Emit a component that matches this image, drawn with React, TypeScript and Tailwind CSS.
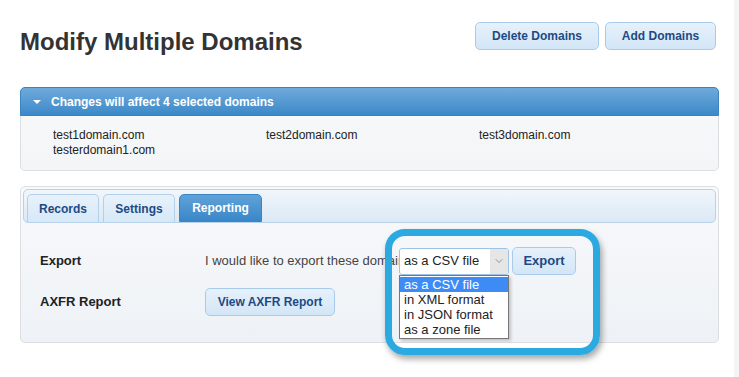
import { ChevronDown } from 'lucide-react';

const domains = ['test1domain.com', 'test2domain.com', 'test3domain.com', 'testerdomain1.com'];
const formats = ['as a CSV file', 'in XML format', 'in JSON format', 'as a zone file'];

const btn =
  'rounded-[5px] border border-[#a9cbea] bg-gradient-to-b from-[#e6f1fb] to-[#d3e6f7] text-[12px] font-bold text-[#1d4a84]';

function Tab({ label, width, active }: { label: string; width: string; active?: boolean }) {
  return (
    <div
      className={
        active
          ? `flex h-[28px] ${width} items-center justify-center rounded-t-[5px] border border-[#3a84c3] bg-gradient-to-b from-[#5fa2d8] to-[#3987c8] text-[12px] font-bold text-white`
          : `flex h-[28px] ${width} items-center justify-center rounded-t-[5px] border border-b-0 border-[#b3d0ea] bg-gradient-to-b from-[#e8f2fb] to-[#d6e8f7] text-[12px] font-bold text-[#1d4a84]`
      }
    >
      {label}
    </div>
  );
}

export default function App() {
  return (
    <div className="flex h-[377px] w-[739px] overflow-hidden bg-white font-['Liberation_Sans',Arial,sans-serif] text-[#222]">
      <div className="relative w-[734px] pl-5 pr-[15px]">
        {/* header */}
        <div className="flex items-start justify-between pt-[22px]">
          <h1 className="mt-[6px] text-[24px] font-bold leading-[28px] text-[#333]">Modify Multiple Domains</h1>
          <div className="mr-[3px] flex gap-[6px]">
            <button className={`${btn} h-[28px] w-[124px]`}>Delete Domains</button>
            <button className={`${btn} h-[28px] w-[111px]`}>Add Domains</button>
          </div>
        </div>

        {/* selected domains */}
        <div className="mt-[31px] rounded-[5px] border border-[#dcdfe2] bg-gradient-to-b from-[#f8f9fa] to-[#f3f5f7]">
          <div className="-m-px flex h-[29px] items-center gap-[10px] rounded-t-[5px] border border-[#3b82c0] bg-gradient-to-b from-[#6eaadb] to-[#3b89c9] pl-[12px] text-[12px] font-bold text-white">
            <span className="h-0 w-0 border-x-[4px] border-t-[4px] border-x-transparent border-t-white" />
            Changes will affect 4 selected domains
          </div>
          <div className="grid grid-cols-[213px_213px_1fr] px-[32px] pb-[12px] pt-[13px] text-[12px] leading-[15px]">
            {domains.map((d) => (
              <div key={d}>{d}</div>
            ))}
          </div>
        </div>

        {/* tabs panel */}
        <div className="mt-[15px] h-[157px] rounded-[5px] border border-[#dcdfe2] bg-gradient-to-b from-[#f8f9fb] to-[#eef2f6] p-[2px]">
          <div className="flex h-[34px] items-end gap-[4px] rounded-[5px] border border-[#b8d2ea] bg-gradient-to-b from-[#f1f6fb] to-[#dbe8f5] px-[3px]">
            <Tab label="Records" width="w-[72px]" />
            <Tab label="Settings" width="w-[72px]" />
            <Tab label="Reporting" width="w-[83px]" active />
          </div>

          <div className="grid grid-cols-[165px_1fr] items-center gap-y-[13px] px-[17px] pt-[24px] text-[13px]">
            <div className="font-bold text-[#222]">Export</div>
            <div className="flex items-center">
              <span className="w-[194px] shrink-0 whitespace-nowrap text-[#444]">I would like to export these domains</span>
              <div className="relative">
                <div className="flex h-[27px] w-[110px] items-center justify-between rounded-[3px] border border-[#9ec3e6] bg-white pl-[4px] text-[13px] text-[#222]">
                  as a CSV file
                  <span className="flex h-full w-[18px] items-center justify-center bg-[#e6e6e6]">
                    <ChevronDown size={12} strokeWidth={1.5} className="text-[#777]" />
                  </span>
                </div>
                <div className="absolute left-0 top-[27px] z-10 w-[110px] border border-[#767676] bg-white py-px text-[13px] leading-[15px] shadow-[2px_2px_3px_rgba(0,0,0,0.2)]">
                  {formats.map((f, i) => (
                    <div key={f} className={i === 0 ? 'bg-[#3d8bf4] pl-[4px] text-white' : 'pl-[4px]'}>
                      {f}
                    </div>
                  ))}
                </div>
              </div>
              <button className={`${btn} ml-[3px] h-[28px] w-[64px] text-[13px]`}>Export</button>
            </div>
            <div className="font-bold text-[#222]">AXFR Report</div>
            <div>
              <button className={`${btn} h-[28px] w-[130px]`}>View AXFR Report</button>
            </div>
          </div>
        </div>

        {/* highlight ring */}
        <div className="pointer-events-none absolute left-[385px] top-[229px] h-[126px] w-[215px] rounded-[20px] border-[7px] border-[#2ba9e1] shadow-[2px_4px_6px_rgba(0,0,0,0.35)]" />
      </div>
      <div className="w-[5px] bg-[#f4f4f4]" />
    </div>
  );
}
